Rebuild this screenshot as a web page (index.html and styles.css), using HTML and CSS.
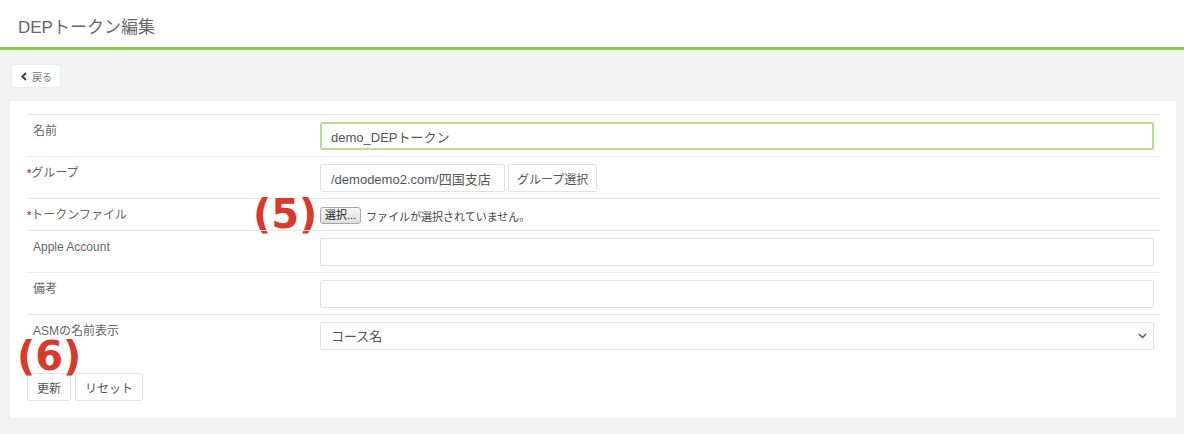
FILE: index.html
```html
<!DOCTYPE html>
<html lang="ja">
<head>
  <meta charset="UTF-8" />
  <meta name="viewport" content="width=device-width, initial-scale=1.0" />
  <title>DEPトークン編集</title>
  <link rel="stylesheet" href="styles.css">
</head>
<body>

  <header class="page-header">
    <h1>DEPトークン編集</h1>
  </header>

  <main class="content">
    <button type="button" class="back-btn">
      <svg width="8" height="9" viewBox="0 0 8 9"><path d="M6 1 L2.5 4.5 L6 8" fill="none" stroke="#444" stroke-width="2"/></svg>
      戻る
    </button>

    <form class="panel">
      <div class="form-row">
        <div class="form-label">名前</div>
        <div class="form-field">
          <input type="text" class="text-input is-focus" value="demo_DEPトークン">
        </div>
      </div>

      <div class="form-row">
        <div class="form-label"><span class="req">*</span>グループ</div>
        <div class="form-field group-field">
          <input type="text" class="text-input group-input" value="/demodemo2.com/四国支店" readonly>
          <button type="button" class="btn">グループ選択</button>
        </div>
      </div>

      <div class="form-row file-row">
        <div class="form-label"><span class="req">*</span>トークンファイル</div>
        <div class="form-field file-field">
          <span class="file-btn">選択...</span>
          <span class="file-name">ファイルが選択されていません。</span>
        </div>
        <span class="note note-5">(5)</span>
      </div>

      <div class="form-row">
        <div class="form-label">Apple Account</div>
        <div class="form-field">
          <input type="text" class="text-input">
        </div>
      </div>

      <div class="form-row">
        <div class="form-label">備考</div>
        <div class="form-field">
          <input type="text" class="text-input">
        </div>
      </div>

      <div class="form-row">
        <div class="form-label">ASMの名前表示</div>
        <div class="form-field">
          <div class="select-wrap">
            <select class="text-input select">
              <option>コース名</option>
            </select>
            <svg class="select-arrow" width="9" height="6" viewBox="0 0 9 6"><path d="M1 1 L4.5 4.5 L8 1" fill="none" stroke="#555" stroke-width="1.4"/></svg>
          </div>
        </div>
      </div>

      <div class="form-actions">
        <span class="note note-6">(6)</span>
        <button type="submit" class="btn">更新</button>
        <button type="reset" class="btn">リセット</button>
      </div>
    </form>
  </main>

</body>
</html>
```

FILE: styles.css
```css
body {
  margin: 0;
  background: #f2f2f2;
  font-family: "Liberation Sans", "Noto Sans CJK JP", sans-serif;
  color: #555;
}

.page-header {
  background: #fff;
  height: 47px;
  border-bottom: 3px solid #8cc84b;
  display: flex;
  align-items: center;
  padding-left: 18px;
}

.page-header h1 {
  margin: 0;
  font-size: 17px;
  font-weight: normal;
  color: #666;
  padding-top: 4px;
}

.content {
  padding: 14px 8px 17px 10px;
}

.back-btn {
  margin-left: 1px;
  width: 50px;
  height: 24px;
  background: #fff;
  border: 1px solid #ececec;
  border-radius: 3px;
  font-family: inherit;
  font-size: 10px;
  color: #777;
  display: flex;
  align-items: center;
  gap: 4px;
  padding: 0 0 0 8px;
}

.panel {
  margin-top: 13px;
  background: #fff;
  padding: 13px 16px 17px 17px;
}

.form-row {
  display: flex;
  border-top: 1px solid #e8e8e8;
  position: relative;
}

.form-label {
  box-sizing: border-box;
  width: 287px;
  padding: 8px 6px 0;
  font-size: 12px;
  color: #666;
  line-height: 16px;
}

.req {
  color: #d9432b;
  font-weight: bold;
  font-size: 11px;
}

.form-label:has(.req) {
  padding-left: 0;
}

.form-field {
  flex: 1;
  padding: 7px 6px 6px;
}

.text-input {
  display: block;
  box-sizing: border-box;
  width: 100%;
  height: 28px;
  border: 1px solid #e2e2e2;
  border-radius: 2px;
  background: #fff;
  padding: 0 10px;
  font-family: inherit;
  font-size: 13px;
  color: #555;
  outline: none;
}

.text-input.is-focus {
  border: 2px solid #b7df8e;
  padding-left: 9px;
}

.group-field {
  display: flex;
  gap: 3px;
}

.group-input {
  width: 185px;
}

.btn {
  height: 28px;
  box-sizing: border-box;
  background: #fff;
  border: 1px solid #e2e2e2;
  border-radius: 2px;
  padding: 0 8px;
  font-family: inherit;
  font-size: 12px;
  color: #555;
}

.file-field {
  display: flex;
  align-items: center;
  gap: 5px;
  padding-top: 8px;
  padding-bottom: 6px;
}

.file-btn {
  box-sizing: border-box;
  height: 17px;
  width: 41px;
  border: 1px solid #a6a6a6;
  border-radius: 3px;
  background: linear-gradient(#f6f6f6, #dedede);
  font-size: 11px;
  color: #222;
  line-height: 15px;
  text-align: center;
}

.file-name {
  font-size: 11px;
  color: #444;
}

.select {
  appearance: none;
  -webkit-appearance: none;
}

.select-wrap {
  position: relative;
}

.select-arrow {
  position: absolute;
  right: 7px;
  top: 11px;
}

.form-actions {
  position: relative;
  display: flex;
  gap: 4px;
  margin-top: 17px;
}

.form-actions .btn {
  height: 28px;
  padding: 0 9px;
}

.note {
  position: absolute;
  font-family: "DejaVu Sans", sans-serif;
  font-weight: bold;
  font-size: 40px;
  line-height: 1;
  color: #d9392b;
}

.note-5 {
  left: 226px;
  top: -5px;
}

.note-6 {
  left: -10px;
  top: -37px;
}
```
